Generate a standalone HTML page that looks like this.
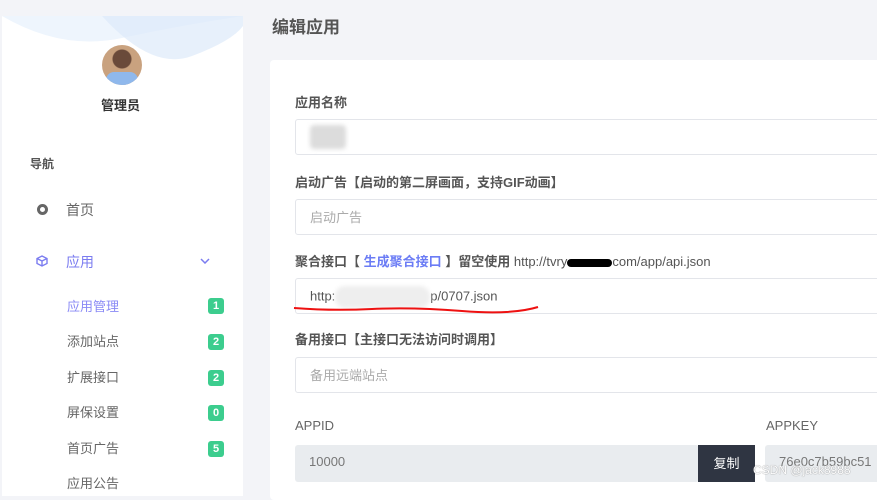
<!DOCTYPE html>
<html><head><meta charset="utf-8"><style>
*{margin:0;padding:0;box-sizing:border-box}
body{width:877px;height:488px;overflow:hidden;background:#f3f4f8;font-family:"Liberation Sans","Noto Sans CJK SC",sans-serif;position:relative}
.a{position:absolute}
.side{left:2px;top:16px;width:241px;height:480px;background:#fff;overflow:hidden}
.lbl{font-size:13px;color:#555;font-weight:bold}
.inp{position:absolute;left:295px;right:-10px;height:36px;border:1px solid #e3e5ea;border-radius:3px;background:#fff;font-size:13px;color:#aaa;padding:7px 14px}
.sub{position:absolute;left:67px;font-size:13px;color:#666}
.b{position:absolute;left:208px;width:16px;height:16px;border-radius:3px;background:#3ccd8e;color:#fff;font-size:11px;font-weight:bold;text-align:center;line-height:16px}
</style></head><body>
<div class="a side">
<svg class="a" style="left:0;top:0" width="241" height="60"><path d="M0 0 Q60 35 120 22 T241 0 Z" fill="#eef5fd"/><path d="M100 0 Q150 55 190 40 T241 10 L241 0Z" fill="#dde9fa" opacity=".7"/></svg>
</div>
<div class="a" style="left:102px;top:45px;width:40px;height:40px;border-radius:50%;background:radial-gradient(circle at 50% 35%,#6a4a3a 0 9px,#c9a27f 10px);overflow:hidden"><div style="position:absolute;left:4px;top:27px;width:32px;height:14px;background:#8fb8ec;border-radius:8px 8px 0 0"></div></div>
<div class="a" style="left:101px;top:95px;font-size:13px;font-weight:bold;color:#333">管理员</div>
<div class="a" style="left:30px;top:155px;font-size:12px;color:#555;font-weight:bold">导航</div>
<div class="a" style="left:37px;top:204px;width:11px;height:11px;border-radius:50%;border:3.5px solid #666"></div>
<div class="a" style="left:66px;top:200px;font-size:14px;color:#666">首页</div>
<svg class="a" style="left:36px;top:255px" width="12" height="12" viewBox="0 0 12 12"><path d="M6 1 L11 3.5 V8.5 L6 11 L1 8.5 V3.5Z M1 3.5 L6 6 L11 3.5 M6 6 V11" fill="none" stroke="#7b7cf0" stroke-width="1.4"/></svg>
<div class="a" style="left:66px;top:252px;font-size:14px;color:#7b7cf0">应用</div>
<svg class="a" style="left:200px;top:258px" width="10" height="6"><path d="M1 1 L5 5 L9 1" fill="none" stroke="#7b7cf0" stroke-width="1.5"/></svg>
<div class="sub" style="top:296px;color:#8a8af5">应用管理</div><div class="b" style="top:298px">1</div>
<div class="sub" style="top:331px">添加站点</div><div class="b" style="top:334px">2</div>
<div class="sub" style="top:367px">扩展接口</div><div class="b" style="top:370px">2</div>
<div class="sub" style="top:402px">屏保设置</div><div class="b" style="top:405px">0</div>
<div class="sub" style="top:438px">首页广告</div><div class="b" style="top:441px">5</div>
<div class="sub" style="top:473px">应用公告</div>

<div class="a" style="left:272px;top:13px;font-size:17px;font-weight:bold;color:#555">编辑应用</div>
<div class="a" style="left:270px;top:60px;width:620px;height:440px;background:#fff;border-radius:4px"></div>
<div class="a lbl" style="left:295px;top:92px">应用名称</div>
<div class="inp" style="top:119px"><span style="display:inline-block;width:36px;height:24px;margin-top:-2px;background:#dcdcdc;border-radius:4px;filter:blur(2px)"></span></div>
<div class="a lbl" style="left:295px;top:172px">启动广告【启动的第二屏画面，支持GIF动画】</div>
<div class="inp" style="top:199px">启动广告</div>
<div class="a lbl" style="left:295px;top:251px">聚合接口【 <span style="color:#6b7cf5">生成聚合接口</span> 】留空使用 <span style="font-weight:normal;color:#555">http://tvry<span style="display:inline-block;width:45px;height:8px;background:#000;border-radius:4px;vertical-align:middle"></span>com/app/api.json</span></div>
<div class="inp" style="top:278px;color:#555">http:<span style="display:inline-block;width:95px;height:22px;vertical-align:middle;background:#eee;border-radius:10px;filter:blur(2px)"></span>p/0707.json</div>
<svg class="a" style="left:292px;top:302px" width="250" height="14"><path d="M2 6 Q40 9 80 7 T170 9 T246 5" fill="none" stroke="#e11" stroke-width="2"/></svg>
<div class="a lbl" style="left:295px;top:329px">备用接口【主接口无法访问时调用】</div>
<div class="inp" style="top:357px">备用远端站点</div>
<div class="a" style="left:295px;top:418px;font-size:13px;color:#666">APPID</div>
<div class="a" style="left:766px;top:418px;font-size:13px;color:#666">APPKEY</div>
<div class="a" style="left:295px;top:445px;width:404px;height:37px;background:#e9ecef;border-radius:3px;font-size:13px;color:#777;padding:9px 14px">10000</div>
<div class="a" style="left:698px;top:445px;width:57px;height:37px;background:#2f3542;color:#fff;font-size:13px;text-align:center;line-height:37px">复制</div>
<div class="a" style="left:765px;top:445px;width:120px;height:37px;background:#e9ecef;border-radius:3px;font-size:13px;color:#777;padding:9px 14px;white-space:nowrap;overflow:hidden">76e0c7b59bc51</div>
<div class="a" style="left:753px;top:463px;font-size:12px;color:#fff;text-shadow:0 0 1px #666">CSDN @jack8988</div>
</body></html>
